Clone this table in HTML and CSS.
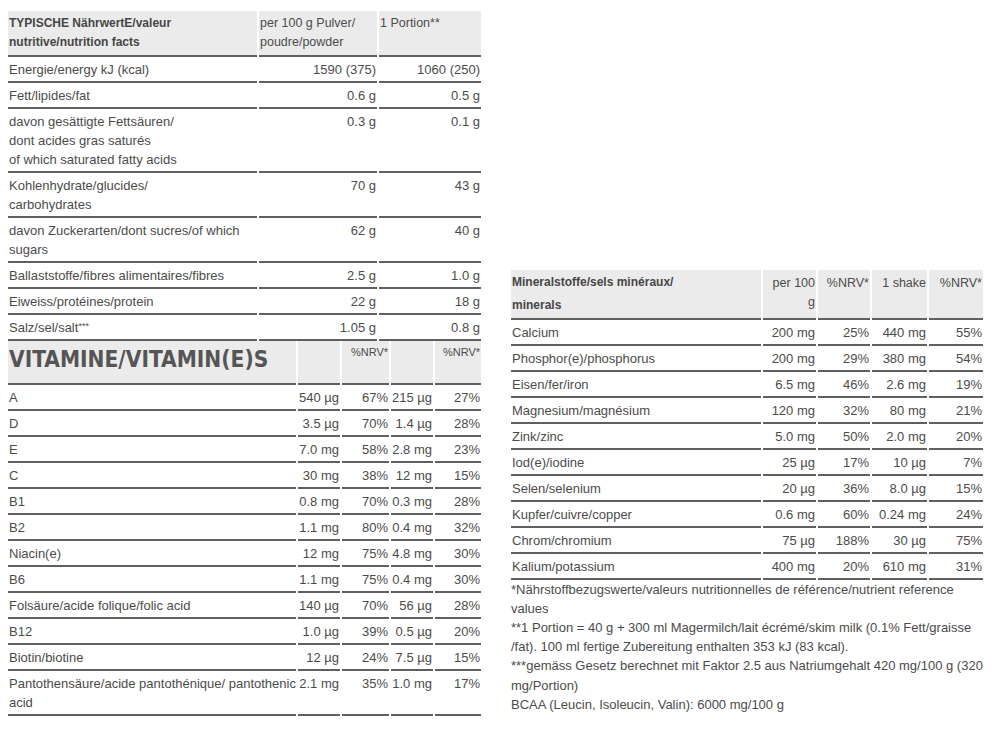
FILE: index.html
```html
<!DOCTYPE html>
<html lang="de">
<head>
<meta charset="utf-8">
<title>Nährwerte</title>
<link rel="stylesheet" href="styles.css">
</head>
<body>
<div class="page">
  <div class="col col-left">
    <table class="nt t-main">
      <colgroup><col class="w249"><col class="w118"><col class="w102"></colgroup>
      <thead>
        <tr>
          <th class="hb">TYPISCHE NährwertE/valeur nutritive/nutrition facts</th>
          <th>per 100 g Pulver/ poudre/powder</th>
          <th>1 Portion**</th>
        </tr>
      </thead>
      <tbody>
        <tr><td>Energie/energy kJ (kcal)</td><td class="num">1590 (375)</td><td class="num">1060 (250)</td></tr>
        <tr><td>Fett/lipides/fat</td><td class="num">0.6 g</td><td class="num">0.5 g</td></tr>
        <tr><td>davon gesättigte Fettsäuren/<br>dont acides gras saturés<br>of which saturated fatty acids</td><td class="num">0.3 g</td><td class="num">0.1 g</td></tr>
        <tr><td>Kohlenhydrate/glucides/<br>carbohydrates</td><td class="num">70 g</td><td class="num">43 g</td></tr>
        <tr><td>davon Zuckerarten/dont sucres/of which sugars</td><td class="num">62 g</td><td class="num">40 g</td></tr>
        <tr><td>Ballaststoffe/fibres alimentaires/fibres</td><td class="num">2.5 g</td><td class="num">1.0 g</td></tr>
        <tr><td>Eiweiss/protéines/protein</td><td class="num">22 g</td><td class="num">18 g</td></tr>
        <tr><td>Salz/sel/salt<span class="sup">***</span></td><td class="num">1.05 g</td><td class="num">0.8 g</td></tr>
      </tbody>
    </table>
    <table class="nt t-vit">
      <colgroup><col class="w288"><col class="w42"><col class="w47"><col class="w42"><col class="w46"></colgroup>
      <thead>
        <tr>
          <th class="big">VITAMINE/VITAMIN(E)S</th>
          <th></th>
          <th class="num nrv">%NRV*</th>
          <th></th>
          <th class="num nrv">%NRV*</th>
        </tr>
      </thead>
      <tbody>
        <tr><td>A</td><td class="num">540 µg</td><td class="num">67%</td><td class="num">215 µg</td><td class="num">27%</td></tr>
        <tr><td>D</td><td class="num">3.5 µg</td><td class="num">70%</td><td class="num">1.4 µg</td><td class="num">28%</td></tr>
        <tr><td>E</td><td class="num">7.0 mg</td><td class="num">58%</td><td class="num">2.8 mg</td><td class="num">23%</td></tr>
        <tr><td>C</td><td class="num">30 mg</td><td class="num">38%</td><td class="num">12 mg</td><td class="num">15%</td></tr>
        <tr><td>B1</td><td class="num">0.8 mg</td><td class="num">70%</td><td class="num">0.3 mg</td><td class="num">28%</td></tr>
        <tr><td>B2</td><td class="num">1.1 mg</td><td class="num">80%</td><td class="num">0.4 mg</td><td class="num">32%</td></tr>
        <tr><td>Niacin(e)</td><td class="num">12 mg</td><td class="num">75%</td><td class="num">4.8 mg</td><td class="num">30%</td></tr>
        <tr><td>B6</td><td class="num">1.1 mg</td><td class="num">75%</td><td class="num">0.4 mg</td><td class="num">30%</td></tr>
        <tr><td>Folsäure/acide folique/folic acid</td><td class="num">140 µg</td><td class="num">70%</td><td class="num">56 µg</td><td class="num">28%</td></tr>
        <tr><td>B12</td><td class="num">1.0 µg</td><td class="num">39%</td><td class="num">0.5 µg</td><td class="num">20%</td></tr>
        <tr><td>Biotin/biotine</td><td class="num">12 µg</td><td class="num">24%</td><td class="num">7.5 µg</td><td class="num">15%</td></tr>
        <tr><td class="nw">Pantothensäure/acide pantothénique/ pantothenic<br>acid</td><td class="num">2.1 mg</td><td class="num">35%</td><td class="num">1.0 mg</td><td class="num">17%</td></tr>
      </tbody>
    </table>
  </div>
  <div class="col col-right">
    <table class="nt t-min">
      <colgroup><col class="w250"><col class="w53"><col class="w52"><col class="w55"><col class="w54"></colgroup>
      <thead>
        <tr>
          <th class="hb hb-tall">Mineralstoffe/sels minéraux/<br>minerals</th>
          <th class="num">per 100<br>g</th>
          <th class="num">%NRV*</th>
          <th class="num">1 shake</th>
          <th class="num">%NRV*</th>
        </tr>
      </thead>
      <tbody>
        <tr><td>Calcium</td><td class="num">200 mg</td><td class="num">25%</td><td class="num">440 mg</td><td class="num">55%</td></tr>
        <tr><td>Phosphor(e)/phosphorus</td><td class="num">200 mg</td><td class="num">29%</td><td class="num">380 mg</td><td class="num">54%</td></tr>
        <tr><td>Eisen/fer/iron</td><td class="num">6.5 mg</td><td class="num">46%</td><td class="num">2.6 mg</td><td class="num">19%</td></tr>
        <tr><td>Magnesium/magnésium</td><td class="num">120 mg</td><td class="num">32%</td><td class="num">80 mg</td><td class="num">21%</td></tr>
        <tr><td>Zink/zinc</td><td class="num">5.0 mg</td><td class="num">50%</td><td class="num">2.0 mg</td><td class="num">20%</td></tr>
        <tr><td>Iod(e)/iodine</td><td class="num">25 µg</td><td class="num">17%</td><td class="num">10 µg</td><td class="num">7%</td></tr>
        <tr><td>Selen/selenium</td><td class="num">20 µg</td><td class="num">36%</td><td class="num">8.0 µg</td><td class="num">15%</td></tr>
        <tr><td>Kupfer/cuivre/copper</td><td class="num">0.6 mg</td><td class="num">60%</td><td class="num">0.24 mg</td><td class="num">24%</td></tr>
        <tr><td>Chrom/chromium</td><td class="num">75 µg</td><td class="num">188%</td><td class="num">30 µg</td><td class="num">75%</td></tr>
        <tr><td>Kalium/potassium</td><td class="num">400 mg</td><td class="num">20%</td><td class="num">610 mg</td><td class="num">31%</td></tr>
      </tbody>
    </table>
    <div class="notes">
      <p>*Nährstoffbezugswerte/valeurs nutritionnelles de référence/nutrient reference values</p>
      <p>**1 Portion = 40 g + 300 ml Magermilch/lait écrémé/skim milk (0.1% Fett/graisse<br>/fat). 100 ml fertige Zubereitung enthalten 353 kJ (83 kcal).</p>
      <p>***gemäss Gesetz berechnet mit Faktor 2.5 aus Natriumgehalt 420 mg/100 g (320 mg/Portion)</p>
      <p>BCAA (Leucin, Isoleucin, Valin): 6000 mg/100 g</p>
    </div>
  </div>
</div>
</body>
</html>
```

FILE: styles.css
```css
html, body {
  margin: 0;
  background: #ffffff;
}

body {
  color: #4b4b4b;
  font-family: "Liberation Sans", Arial, sans-serif;
  font-size: 13px;
}

.page {
  display: flex;
  align-items: flex-end;
  gap: 30px;
  padding: 11px 0 0 8px;
}

.col-left { width: 473px; }
.col-right { width: 472px; padding-bottom: 2px; }

.nt {
  border-collapse: separate;
  border-spacing: 2px 0;
  table-layout: fixed;
  margin: 0 -2px;
}

.t-main, .t-vit { width: 477px; }
.t-min { width: 476px; }

.w249 { width: 249px; }
.w118 { width: 118px; }
.w102 { width: 102px; }
.w288 { width: 288px; }
.w42 { width: 42px; }
.w47 { width: 47px; }
.w46 { width: 46px; }
.w250 { width: 250px; }
.w53 { width: 53px; }
.w52 { width: 52px; }
.w55 { width: 55px; }
.w54 { width: 54px; }

.nt th,
.nt td {
  border-bottom: 2px solid #5f5f5f;
  padding: 3px 1px 2px;
  line-height: 19px;
  vertical-align: top;
  text-align: left;
  font-weight: normal;
}

.nt thead th {
  background: #ebebeb;
  font-size: 12.5px;
  padding-top: 3px;
  padding-bottom: 3px;
}

.nt .num {
  text-align: right;
  white-space: nowrap;
}

.nt thead th.hb {
  font-size: 12px;
  font-weight: bold;
  color: #464646;
}

.nt thead th.hb-tall {
  line-height: 23px;
  padding-top: 1px;
  padding-bottom: 1px;
}

.nt thead th.big {
  font-family: "DejaVu Sans Condensed", "Liberation Sans", sans-serif;
  font-stretch: condensed;
  font-size: 22.5px;
  font-weight: bold;
  line-height: 36px;
  padding: 0 1px 6px;
  color: #555555;
  white-space: nowrap;
}

.nt thead th.nrv {
  font-size: 11px;
  padding-top: 2px;
}

.t-min thead th { padding-top: 4px; }
.t-min thead th.hb-tall { padding-top: 1px; }

.nw { white-space: nowrap; }

.sup {
  font-size: 9px;
  vertical-align: 3px;
  line-height: 0;
}

.notes {
  line-height: 19.2px;
}

.notes p { margin: 0; }
```
